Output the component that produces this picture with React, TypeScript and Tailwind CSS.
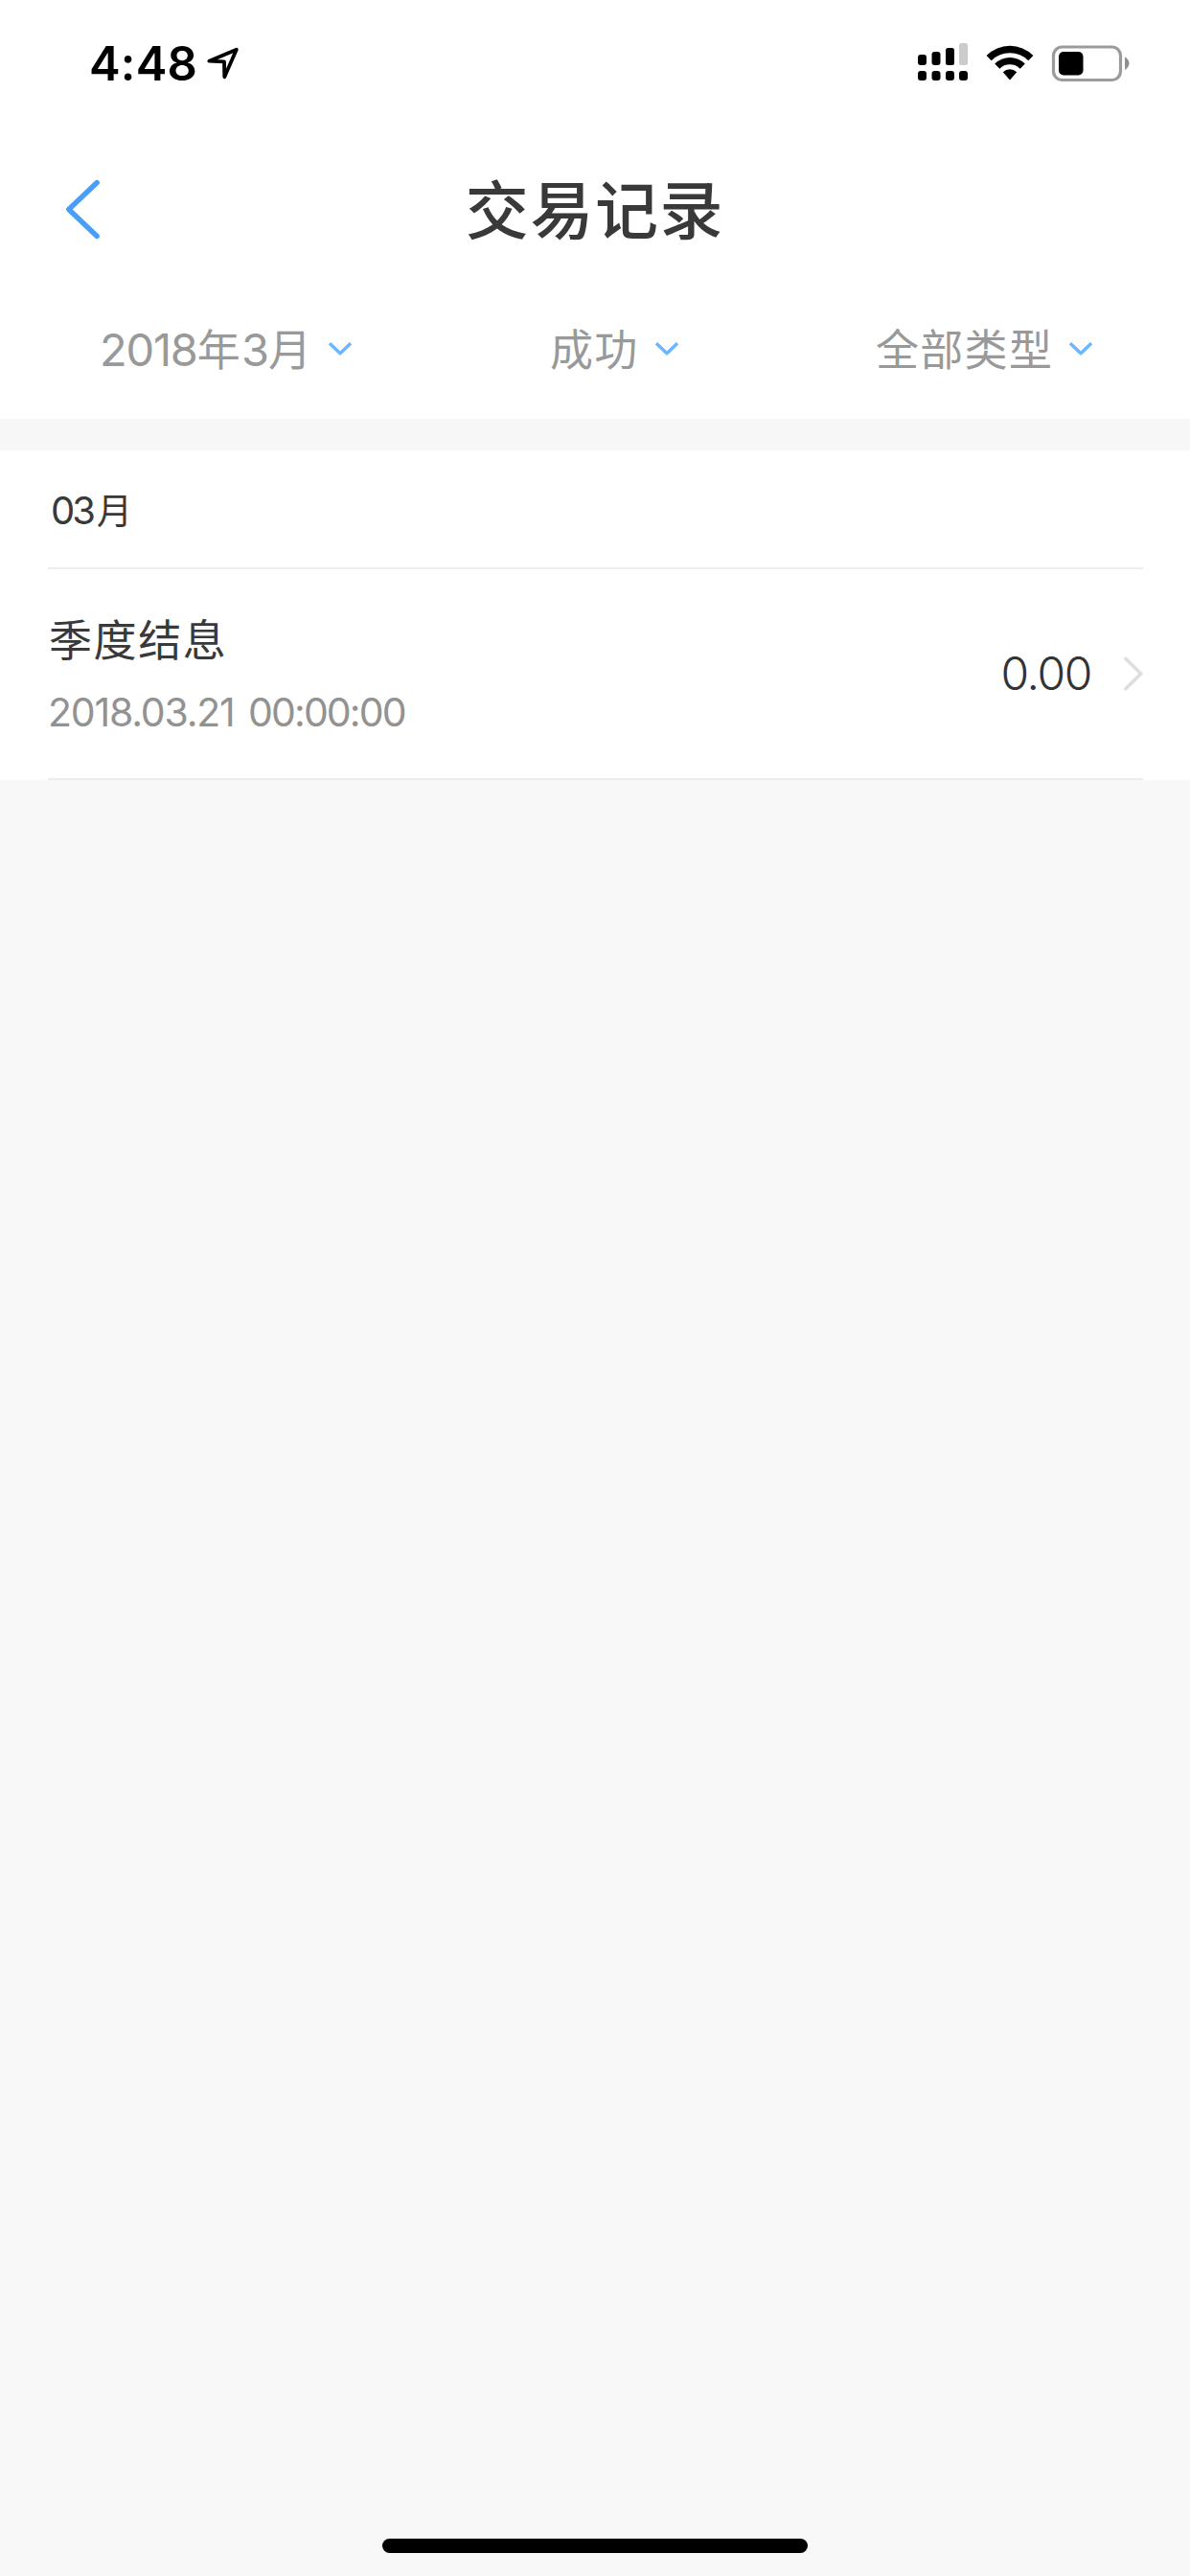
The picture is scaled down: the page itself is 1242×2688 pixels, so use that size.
import { twMerge } from "tailwind-merge";

type TextRun = { text: string; latin?: boolean };

const filters: { label: TextRun[]; className: string }[] = [
  {
    label: [
      { text: "2018", latin: true },
      { text: "年" },
      { text: "3", latin: true },
      { text: "月" },
    ],
    className: "pl-[104px] w-[412px]",
  },
  { label: [{ text: "成功" }], className: "pl-[162px] w-[412px]" },
  { label: [{ text: "全部类型" }], className: "pl-[90px] w-[418px]" },
];

const records = [
  {
    title: "季度结息",
    date: "2018.03.21",
    time: "00:00:00",
    amount: "0.00",
  },
];

function StatusBar() {
  return (
    <div className="flex h-[132px] items-start justify-between pl-[93px] pr-[60px]">
      <div className="flex pt-[36px]">
        <span className="mt-px w-[121px] text-[49px] leading-[60px] font-semibold tracking-[0.2px] text-black">
          4:48
        </span>
        <svg
          className="mt-[11px] h-[38px] w-[38px]"
          viewBox="0 0 38 38"
          fill="none"
          stroke="#000"
          strokeWidth="3.8"
          strokeLinejoin="round"
        >
          <path d="M4.3 16.7 32.8 4.8 20.3 33.2 20 17.4Z" />
        </svg>
      </div>
      <div className="flex pt-[42px]">
        <svg className="h-[46px] w-[70px]" viewBox="0 0 70 46">
          <rect x="16" y="15" width="9" height="11" rx="3" />
          <rect x="30.5" y="12" width="9" height="14" rx="3" />
          <rect x="45" y="8" width="9" height="18" rx="2.5" />
          <rect x="59" y="3" width="9" height="23" rx="2.5" fill="#cbcbcb" />
          <rect x="16" y="32" width="9" height="10" rx="3" />
          <rect x="30.5" y="32" width="9" height="10" rx="3" />
          <rect x="45" y="32" width="9" height="10" rx="3" />
          <rect x="59" y="32" width="9" height="10" rx="3" />
        </svg>
        <svg className="ml-[16px] h-[46px] w-[52px]" viewBox="0 0 52 46">
          <path d="M1.6 15.9 A34.5 34.5 0 0 1 50.4 15.9 L45.3 21.2 A27.3 27.3 0 0 0 6.7 21.2Z" />
          <path d="M10.2 24.5 A22.5 22.5 0 0 1 41.8 24.5 L36.7 29.7 A15.3 15.3 0 0 0 15.3 29.7Z" />
          <path d="M18.8 33.2 A10.2 10.2 0 0 1 33.2 33.2 L26 41.6Z" />
        </svg>
        <svg className="ml-[16px] h-[46px] w-[86px]" viewBox="0 0 86 46">
          <rect
            x="3.5"
            y="7"
            width="70"
            height="34.5"
            rx="9"
            fill="none"
            stroke="#9b9b9b"
            strokeWidth="3.2"
          />
          <rect x="9" y="12" width="25.5" height="24.5" rx="5" />
          <path d="M78 17.5 Q82.5 20 82.5 24 Q82.5 28 78 31Z" fill="#8f8f8f" />
        </svg>
      </div>
    </div>
  );
}

function Header() {
  return (
    <header className="flex h-[174px] items-start justify-between px-[64px]">
      <button className="mt-[50px]">
        <svg
          className="h-[72px] w-[42px]"
          viewBox="0 0 42 72"
          fill="none"
          stroke="#479ffa"
          strokeWidth="5.4"
          strokeLinecap="round"
          strokeLinejoin="round"
        >
          <path d="M37.2 8.5 7.8 36.5 37.2 64.5" />
        </svg>
      </button>
      <h1 className="mt-[40px] text-[66px] leading-[96px] font-medium tracking-[1.6px] text-[#393939]">
        交易记录
      </h1>
      <div className="w-[42px]" />
    </header>
  );
}

function FilterBar() {
  return (
    <nav className="flex h-[131px]">
      {filters.map(({ label, className }, index) => (
        <button
          key={index}
          className={twMerge(
            "flex h-[116px] items-center text-[45px] leading-[60px] tracking-[1.3px] text-[#999]",
            className
          )}
        >
          <span className="mt-[3px]">
            {label.map(({ text, latin }, i) => (
              <span
                key={i}
                className={latin ? "text-[47px] tracking-[-1.2px]" : ""}
              >
                {text}
              </span>
            ))}
          </span>
          <svg
            className="ml-[15px] h-[18px] w-[28px]"
            viewBox="0 0 28 18"
            fill="none"
            stroke="#6cb5ff"
            strokeWidth="3.4"
            strokeLinejoin="round"
          >
            <path d="M3 3.2 14 13.8 25 3.2" />
          </svg>
        </button>
      ))}
    </nav>
  );
}

function RecordList() {
  return (
    <section className="bg-white pr-[49px] pl-[50px]">
      <h2 className="h-[124px] border-b-2 border-[#ededed] pt-[33px] pl-[3px] text-[37px] leading-[60px] text-[#393939]">
        <span className="mr-[4px] text-[40px] tracking-[-3px]">03</span>
        <span>月</span>
      </h2>
      {records.map(({ title, date, time, amount }) => (
        <div
          key={date + time}
          className="flex h-[220px] justify-between border-b-2 border-[#ededed]"
        >
          <div className="flex flex-col pt-[45px]">
            <span className="pl-px text-[45px] leading-[60px] tracking-[1.6px] text-[#393939]">
              {title}
            </span>
            <span className="mt-[14px] text-[41px] leading-[60px] text-[#929292]">
              <span className="tracking-[-1.2px]">{date}</span>{" "}
              <span className="ml-[3px] tracking-[-1.9px]">{time}</span>
            </span>
          </div>
          <div className="flex items-center">
            <span className="text-[48px] leading-[60px] font-light tracking-[-1.4px] text-[#333]">
              {amount}
            </span>
            <svg
              className="ml-[31px] h-[40px] w-[23px]"
              viewBox="0 0 23 40"
              fill="none"
              stroke="#dedede"
              strokeWidth="3.6"
              strokeLinecap="round"
              strokeLinejoin="round"
            >
              <path d="M4.8 4.3 20.8 20 4.8 35.7" />
            </svg>
          </div>
        </div>
      ))}
    </section>
  );
}

function App() {
  return (
    <div className="flex h-[2688px] w-[1242px] flex-col bg-[#f8f8f8] font-['Inter','Noto_Sans_CJK_SC',sans-serif]">
      <div className="bg-white">
        <StatusBar />
        <Header />
        <FilterBar />
      </div>
      <div className="h-[33px] shrink-0 bg-[#f7f7f7]" />
      <RecordList />
      <div className="mx-auto mt-auto mb-[24px] h-[15px] w-[444px] rounded-full bg-black" />
    </div>
  );
}

export default App;
